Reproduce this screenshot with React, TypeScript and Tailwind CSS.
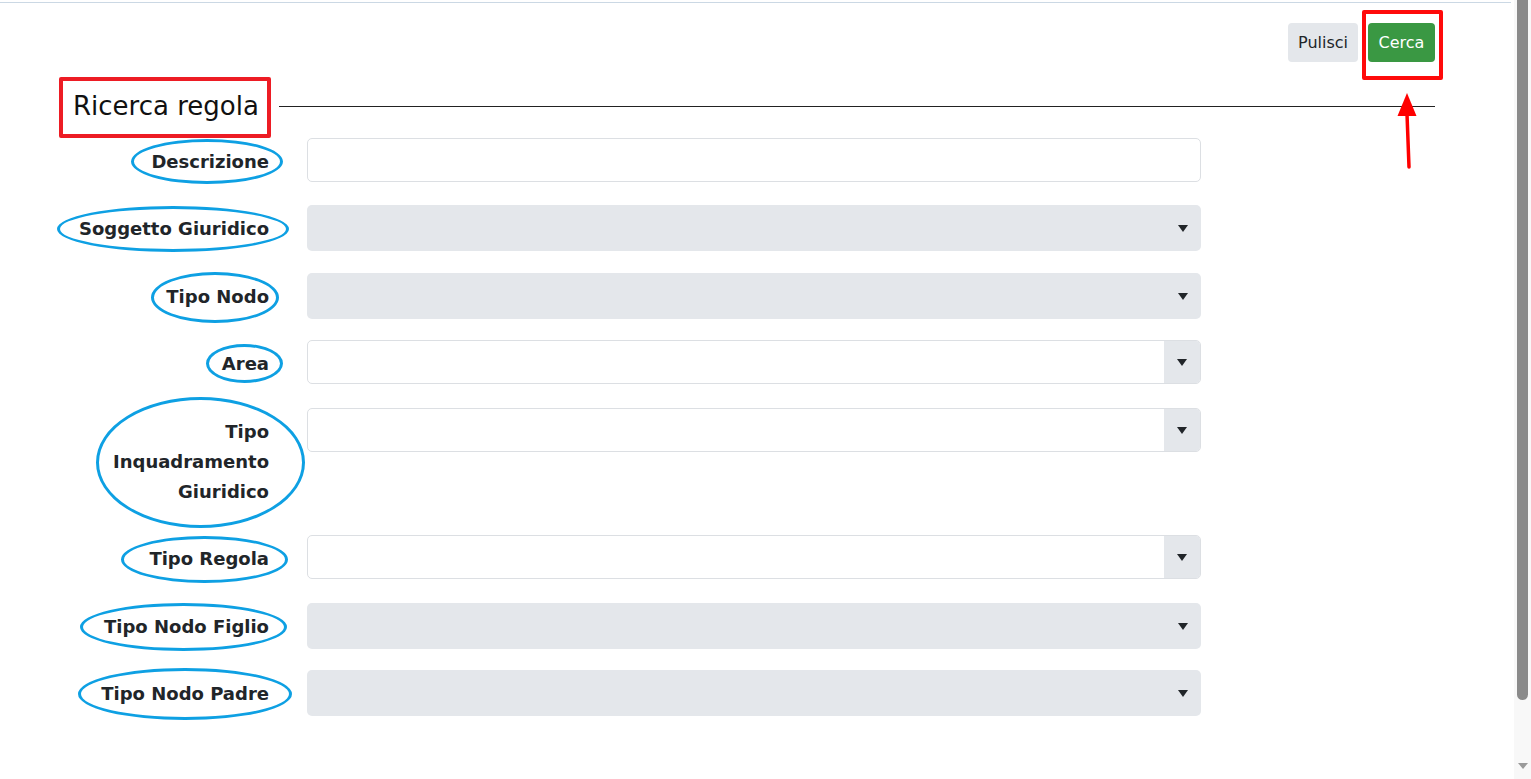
import type { ReactNode } from 'react'

type Campo = {
  label: string
  kind: 'input' | 'disabled' | 'select'
  rowH: string
  ellipse: string
}

const campi: Campo[] = [
  { label: 'Descrizione', kind: 'input', rowH: 'h-[67px]', ellipse: '-left-[20px] -right-[14px] -top-[8px] -bottom-[7px]' },
  { label: 'Soggetto Giuridico', kind: 'disabled', rowH: 'h-[68px]', ellipse: '-left-[22px] -right-[20px] -top-[8px] -bottom-[8px]' },
  { label: 'Tipo Nodo', kind: 'disabled', rowH: 'h-[67px]', ellipse: '-left-[15px] -right-[10px] -top-[10px] -bottom-[11px]' },
  { label: 'Area', kind: 'select', rowH: 'h-[68px]', ellipse: '-left-[16px] -right-[14px] -top-[5px] -bottom-[4px]' },
  { label: 'Tipo Inquadramento Giuridico', kind: 'select', rowH: 'h-[127px]', ellipse: 'left-[23px] -right-[36px] -top-[20px] -bottom-[21px]' },
  { label: 'Tipo Regola', kind: 'select', rowH: 'h-[68px]', ellipse: '-left-[28px] -right-[19px] -top-[8px] -bottom-[9px]' },
  { label: 'Tipo Nodo Figlio', kind: 'disabled', rowH: 'h-[67px]', ellipse: '-left-[24px] -right-[18px] -top-[9px] -bottom-[9px]' },
  { label: 'Tipo Nodo Padre', kind: 'disabled', rowH: 'h-[68px]', ellipse: '-left-[23px] -right-[23px] -top-[11px] -bottom-[11px]' },
]

function Caret() {
  return (
    <svg width="10" height="7" viewBox="0 0 10 7">
      <polygon points="0,0 10,0 5,7" fill="#212529" />
    </svg>
  )
}

function Controllo({ kind }: { kind: Campo['kind'] }): ReactNode {
  if (kind === 'input') {
    return <div className="h-[44px] w-full rounded-[5px] border border-[#dcdfe3] bg-white" />
  }
  if (kind === 'disabled') {
    return (
      <div className="h-[46px] w-full rounded-[5px] bg-[#e4e7eb] flex items-center justify-end pr-[13px]">
        <Caret />
      </div>
    )
  }
  return (
    <div className="h-[44px] w-full rounded-[5px] border border-[#dcdfe3] bg-white flex overflow-hidden">
      <div className="flex-1" />
      <div className="w-[36px] bg-[#e4e7eb] flex items-center justify-center">
        <Caret />
      </div>
    </div>
  )
}

export default function App() {
  return (
    <div className="flex h-[779px] w-full bg-white text-[#212529]" style={{ fontFamily: '"DejaVu Sans", Verdana, sans-serif' }}>
      <div className="flex-1 min-w-0">
        <div className="mt-[2px] mr-[3px] border-t border-[#cbd8e4]" />

        <div className="pl-[73px] pr-[79px]">
          {/* Azioni */}
          <div className="flex justify-end gap-[10px] pt-[20px]">
            <button className="h-[39px] px-[10px] rounded-[4px] bg-[#e4e7eb] text-[16px] text-[#212529]">Pulisci</button>
            <div className="relative">
              <button className="h-[39px] w-[67px] rounded-[4px] bg-[#3a9843] text-[16px] text-white">Cerca</button>
              <div className="absolute -left-[6px] -right-[8px] -top-[13px] -bottom-[18px] border-[4px] border-[#ff0a0a] rounded-[2px]" />
              <svg className="absolute left-[28px] top-[69px]" width="24" height="78" viewBox="0 0 24 78">
                <polygon points="11,1 1.5,24 20.5,24" fill="#ff0000" />
                <line x1="11" y1="22" x2="13" y2="75" stroke="#ff0000" strokeWidth="3.5" strokeLinecap="round" />
              </svg>
            </div>
          </div>

          {/* Titolo */}
          <div className="mt-[28px] flex items-center">
            <div className="relative">
              <h1 className="text-[26px] leading-[32px] text-[#111]">Ricerca regola</h1>
              <div className="absolute -left-[14px] -right-[12px] -top-[13px] -bottom-[16px] border-[4px] border-[#ed1c24] rounded-[2px]" />
            </div>
            <div className="ml-[20px] flex-1 h-px bg-[#222]" />
          </div>

          {/* Campi */}
          <div className="mt-[16px] flex flex-col">
            {campi.map((c) => (
              <div key={c.label} className={`flex gap-[38px] ${c.rowH}`}>
                <div className="w-[196px] shrink-0 pt-[9px] text-right text-[18px] leading-[30px] font-bold">
                  {c.label.includes('Inquadramento') ? (
                    <div className="relative">
                      {c.label}
                      <div className={`absolute border-[3px] border-[#0ea0e3] rounded-[50%] ${c.ellipse}`} />
                    </div>
                  ) : (
                    <span className="relative inline-block">
                      {c.label}
                      <span className={`absolute border-[3px] border-[#0ea0e3] rounded-[50%] ${c.ellipse}`} />
                    </span>
                  )}
                </div>
                <div className="w-[894px]">
                  <Controllo kind={c.kind} />
                </div>
              </div>
            ))}
          </div>
        </div>
      </div>

      {/* Barra di scorrimento */}
      <div className="w-[17px] shrink-0 bg-[#f8f8f8] flex flex-col items-center">
        <div className="w-[11px] h-[700px] rounded-b-[6px] bg-[#8a8a8a]" />
        <div className="flex-1" />
        <svg className="mb-[10px]" width="10" height="6" viewBox="0 0 10 6">
          <polygon points="0,0 10,0 5,6" fill="#9a9a9a" />
        </svg>
      </div>
    </div>
  )
}
